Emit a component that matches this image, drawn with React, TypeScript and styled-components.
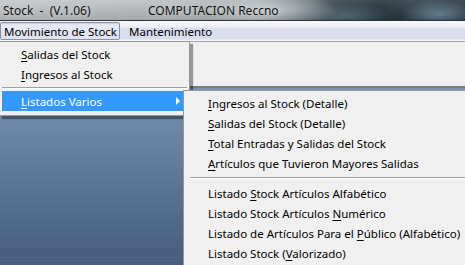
import React from "react";
import styled, { createGlobalStyle } from "styled-components";

const Global = createGlobalStyle`
  html, body { margin: 0; padding: 0; background: #f0f0f0; }
  body { font-family: "Noto Sans", "Open Sans", sans-serif; }
`;

const Window = styled.div`
  position: relative;
  width: 465px;
  height: 265px;
  overflow: hidden;
  display: flex;
  flex-direction: column;
  font-family: "Noto Sans", "Open Sans", sans-serif;
  font-size: 11.5px;
  color: #000;
`;

const TitleBar = styled.div`
  flex: none;
  height: 20px;
  display: flex;
  align-items: center;
  padding-left: 3px;
  border-bottom: 1px solid #2c343a;
  background:
    radial-gradient(ellipse 40px 14px at 440px 14px, rgba(140, 175, 200, 0.55), transparent),
    radial-gradient(ellipse 50px 12px at 345px 16px, rgba(120, 150, 165, 0.45), transparent),
    radial-gradient(ellipse 70px 16px at 270px 10px, rgba(215, 220, 224, 0.7), transparent),
    linear-gradient(180deg, rgba(255, 255, 255, 0.12), rgba(0, 0, 0, 0.12)),
    linear-gradient(90deg, #c3c7ca 0%, #b7bcbf 40%, #a4abaf 55%, #6d797f 64%, #34424a 72%, #22303a 82%, #2e3f4b 92%, #24323c 100%);
`;

const TitleSegment = styled.span<{ $width?: number }>`
  white-space: pre;
  font-size: 12px;
  color: #141414;
  text-shadow: 0 0 6px rgba(255, 255, 255, 0.6);
  width: ${(p) => (p.$width ? `${p.$width}px` : "auto")};
  flex: none;
`;

const MenuBar = styled.div`
  flex: none;
  height: 20px;
  display: flex;
  align-items: center;
  border-bottom: 1px solid #a3a3a3;
  background: linear-gradient(180deg, #f6f7fb 0%, #eef0f6 30%, #dadeee 36%, #d9ddee 90%, #f4f5fa 96%, #f4f5fa 100%);
`;

const MenuBarItem = styled.div<{ $open?: boolean; $pad: string }>`
  height: 16px;
  display: flex;
  align-items: center;
  padding: ${(p) => p.$pad};
  border: 1px solid ${(p) => (p.$open ? "#8c91a3" : "transparent")};
  border-radius: 2px;
  background: ${(p) => (p.$open ? "linear-gradient(180deg, #e9ebf2, #dfe3ef)" : "transparent")};
  box-shadow: ${(p) => (p.$open ? "inset 0 1px 1px rgba(0,0,0,0.12)" : "none")};
  white-space: pre;
`;

const Toolbar = styled.div`
  flex: none;
  height: 44px;
  background: #f0f0f0;
  border-bottom: 2px solid #7c7c7c;
`;

const Desktop = styled.div`
  flex: 1;
  background:
    repeating-linear-gradient(180deg, transparent 0px, transparent 23px, rgba(95, 135, 140, 0.25) 23px, rgba(95, 135, 140, 0.25) 24.3px),
    linear-gradient(180deg, #7893b4 0%, #6f89a8 18%, #5f7898 50%, #4f6787 80%, #465d7d 100%);
`;

const Menu = styled.div<{ $left: number; $top: number; $width: number; $height: number }>`
  position: absolute;
  left: ${(p) => p.$left}px;
  top: ${(p) => p.$top}px;
  width: ${(p) => p.$width}px;
  height: ${(p) => p.$height}px;
  box-sizing: border-box;
  background: #f0f0f0;
  border: 1px solid #979797;
  padding: 2px;
  box-shadow: 3px 3px 1px rgba(0, 0, 0, 0.38);
  display: flex;
  flex-direction: column;
`;

const MenuItem = styled.div<{ $indent: number; $active?: boolean }>`
  position: relative;
  flex: none;
  height: 20px;
  display: flex;
  align-items: center;
  padding-left: ${(p) => p.$indent}px;
  white-space: pre;
  color: ${(p) => (p.$active ? "#fff" : "#000")};
  background: ${(p) => (p.$active ? "#3399ff" : "transparent")};
  u {
    text-decoration: underline;
    text-underline-offset: 2px;
    text-decoration-thickness: 1px;
  }
`;

const Separator = styled.div<{ $height: number; $inset: number }>`
  flex: none;
  height: ${(p) => p.$height}px;
  display: flex;
  align-items: center;
  padding-left: ${(p) => p.$inset}px;
  &::after {
    content: "";
    flex: 1;
    height: 1px;
    background: #a0a0a0;
    border-bottom: 1px solid #ffffff;
  }
`;

const Arrow = styled.span`
  position: absolute;
  right: 7px;
  top: 50%;
  margin-top: -4px;
  width: 0;
  height: 0;
  border-top: 4px solid transparent;
  border-bottom: 4px solid transparent;
  border-left: 4px solid #ffffff;
`;

export default function App() {
  return (
    <Window>
      <Global />
      <TitleBar>
        <TitleSegment $width={145}>{"Stock  -  (V.1.06)"}</TitleSegment>
        <TitleSegment>COMPUTACION Reccno</TitleSegment>
      </TitleBar>
      <MenuBar>
        <MenuBarItem $open $pad="0 2px 0 3px">Movimiento de Stock</MenuBarItem>
        <MenuBarItem $pad="0 6px 0 8px">Mantenimiento</MenuBarItem>
      </MenuBar>
      <Toolbar />
      <Desktop />

      <Menu $left={-1} $top={41} $width={191} $height={75}>
        <MenuItem $indent={19}>
          <span><u>S</u>alidas del Stock</span>
        </MenuItem>
        <MenuItem $indent={19}>
          <span><u>I</u>ngresos al Stock</span>
        </MenuItem>
        <Separator $height={7} $inset={0} />
        <MenuItem $indent={19} $active>
          <span><u>L</u>istados Varios</span>
          <Arrow />
        </MenuItem>
      </Menu>

      <Menu $left={183} $top={90} $width={300} $height={190}>
        <MenuItem $indent={22}>
          <span><u>I</u>ngresos al Stock (Detalle)</span>
        </MenuItem>
        <MenuItem $indent={22}>
          <span><u>S</u>alidas del Stock (Detalle)</span>
        </MenuItem>
        <MenuItem $indent={22}>
          <span><u>T</u>otal Entradas y Salidas del Stock</span>
        </MenuItem>
        <MenuItem $indent={22}>
          <span><u>A</u>rtículos que Tuvieron Mayores Salidas</span>
        </MenuItem>
        <Separator $height={10} $inset={4} />
        <MenuItem $indent={22}>
          <span>Listado <u>S</u>tock Artículos Alfabético</span>
        </MenuItem>
        <MenuItem $indent={22}>
          <span>Listado Stock Artículos <u>N</u>umérico</span>
        </MenuItem>
        <MenuItem $indent={22}>
          <span>Listado de Artículos Para el <u>P</u>úblico (Alfabético)</span>
        </MenuItem>
        <MenuItem $indent={22}>
          <span>Listado Stock (<u>V</u>alorizado)</span>
        </MenuItem>
      </Menu>
    </Window>
  );
}
